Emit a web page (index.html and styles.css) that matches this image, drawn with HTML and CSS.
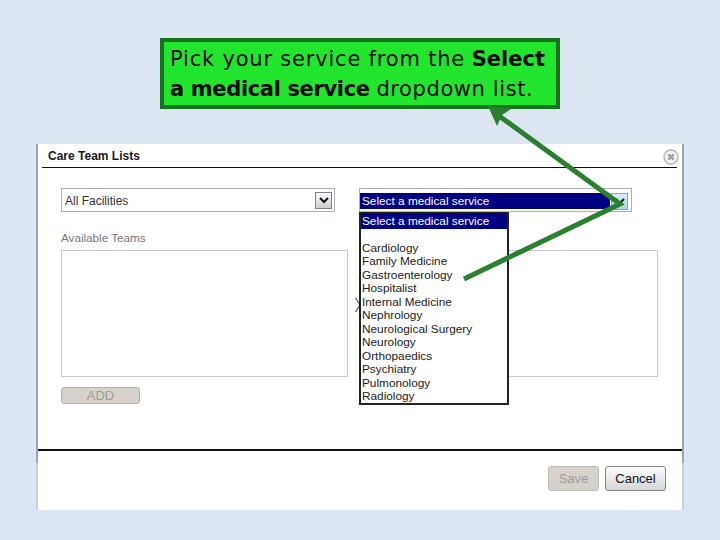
FILE: index.html
```html
<!doctype html>
<html lang="en">
<head>
    <meta charset="UTF-8">
    <title>Care Team Lists</title>
    <link rel="stylesheet" href="styles.css">
</head>
<body>
<div class="callout">
    <span class="callout-first">Pick your service from the</span> <b>Select</b><br><b class="callout-tight">a medical service</b> <span class="callout-rest">dropdown list.</span>
</div>

<div class="dialog">
    <div class="dialog-head">
        <span class="dialog-title">Care Team Lists</span>
        <svg class="close-icon" width="16" height="16" viewBox="0 0 16 16">
            <circle cx="8" cy="8" r="7" fill="#f2f2f2" stroke="#b4b4b4" stroke-width="1.4"/>
            <path d="M5.3 5.3 L10.7 10.7 M10.7 5.3 L5.3 10.7" stroke="#a0a0a0" stroke-width="2.4"/>
        </svg>
    </div>

    <div class="dialog-body">
        <div class="col-left">
            <div class="select">
                <span class="select-text">All Facilities</span>
                <span class="select-btn">
                    <svg width="10" height="7" viewBox="0 0 10 7"><path d="M1 1 L5 5 L9 1" fill="none" stroke="#111" stroke-width="2"/></svg>
                </span>
            </div>
            <div class="label">Available Teams</div>
            <div class="list-box"></div>
            <div class="btn-add">ADD</div>
        </div>
        <div class="col-mid">
            <svg class="move-arrow" width="5" height="14" viewBox="0 0 5 14"><path d="M0.5 0 L5 7 L0.5 14" fill="none" stroke="#555" stroke-width="1.2"/></svg>
        </div>
        <div class="col-right">
            <div class="select select-open">
                <span class="select-text select-picked">Select a medical service</span>
                <span class="select-btn btn-hover">
                    <svg width="10" height="7" viewBox="0 0 10 7"><path d="M1 1 L5 5 L9 1" fill="none" stroke="#111" stroke-width="2"/></svg>
                </span>
                <div class="dropdown">
                    <div class="option option-on">Select a medical service</div>
                    <div class="option option-blank"></div>
                    <div class="option">Cardiology</div>
                    <div class="option">Family Medicine</div>
                    <div class="option">Gastroenterology</div>
                    <div class="option">Hospitalist</div>
                    <div class="option">Internal Medicine</div>
                    <div class="option">Nephrology</div>
                    <div class="option">Neurological Surgery</div>
                    <div class="option">Neurology</div>
                    <div class="option">Orthopaedics</div>
                    <div class="option">Psychiatry</div>
                    <div class="option">Pulmonology</div>
                    <div class="option">Radiology</div>
                </div>
            </div>
            <div class="list-box list-right"></div>
        </div>
    </div>

    <div class="dialog-foot">
        <div class="btn btn-off">Save</div>
        <div class="btn">Cancel</div>
    </div>
</div>

<!-- green pointer lines drawn over the dialog -->
<svg class="pointer" width="720" height="540" viewBox="0 0 720 540">
    <path d="M464 279 L620 204 L495 113" fill="none" stroke="#2b7f30" stroke-width="5"/>
    <path d="M488 106 L511 109 L502 115 L497 126 Z" fill="#2b7f30"/>
</svg>
</body>
</html>
```

FILE: styles.css
```css
* {
    box-sizing: border-box;
}
body {
    margin: 0;
    width: 720px;
    height: 540px;
    overflow: hidden;
    background-color: #dce6f2;
    font-family: "Liberation Sans", Arial, sans-serif;
    padding-top: 38px;
}
.callout {
    width: 400px;
    height: 71px;
    margin-left: 160px;
    padding: 2px 0 0 6px;
    border: 4px solid #16741c;
    background-color: #22e62e;
    color: #0a0a0a;
    font-family: "DejaVu Sans", sans-serif;
    font-size: 21px;
    line-height: 30px;
    white-space: nowrap;
}
.callout-first {
    letter-spacing: 0.8px;
}
.callout-tight {
    letter-spacing: -0.35px;
}
.callout-rest {
    letter-spacing: 0.6px;
}
.dialog {
    width: 648px;
    height: 366px;
    margin: 35px 0 0 36px;
    background-color: #fff;
    border-style: solid;
    border-width: 0 2px;
    border-image: linear-gradient(#a0a4ae 87%, #c8d0dc 87%) 1;
    display: flex;
    flex-direction: column;
}
.dialog-head {
    height: 24px;
    margin: 0 5px 0 4px;
    padding: 5px 0 0 6px;
    border-bottom: 1px solid #111;
    display: flex;
    justify-content: space-between;
}
.dialog-title {
    font-size: 12px;
    font-weight: bold;
    line-height: 15px;
    color: #1a1a1a;
}
.close-icon {
    margin-right: -2px;
}
.dialog-body {
    height: 283px;
    padding: 20px 0 0 23px;
    border-bottom: 2px solid #111;
    display: flex;
}
.col-left {
    width: 287px;
}
.col-mid {
    width: 11px;
    padding: 110px 0 0 7px;
}
.col-right {
    width: 299px;
}
.select {
    width: 274px;
    height: 24px;
    border: 1px solid #adb2b5;
    padding: 3px 2px 3px 3px;
    display: flex;
    justify-content: space-between;
    font-size: 12px;
}
.select-text {
    padding-top: 1px;
    line-height: 17px;
    color: #333;
}
.select-btn {
    width: 17px;
    height: 17px;
    border: 1px solid #7b8188;
    background: linear-gradient(#fafafa, #cfcfcf);
    display: flex;
    align-items: center;
    justify-content: center;
}
.select-open {
    position: relative;
    width: 273px;
    padding: 4px 3px 3px 0;
    font-size: 11.8px;
}
.select-picked {
    flex: 1;
    height: 16px;
    margin-right: 1px;
    padding: 0 0 0 2px;
    line-height: 16px;
    background-color: #000080;
    color: #fff;
}
.btn-hover {
    border-color: #7aa5c4;
    background: linear-gradient(#d8eefc, #a9d6f2);
}
.dropdown {
    position: absolute;
    top: 23px;
    left: -1px;
    z-index: 2;
    width: 150px;
    height: 193px;
    border: 2px solid #222;
    border-top-width: 1px;
    background-color: #fff;
}
.option {
    height: 13.5px;
    line-height: 13.5px;
    padding-left: 1px;
    font-size: 11.8px;
    color: #222;
    white-space: nowrap;
}
.option-on {
    height: 16px;
    line-height: 16px;
    background-color: #000080;
    color: #fff;
}
.option-blank {
    height: 12.5px;
}
.label {
    margin-top: 18px;
    height: 20px;
    font-size: 11.7px;
    line-height: 16px;
    color: #777;
}
.list-box {
    width: 287px;
    height: 127px;
    border: 1px solid #c9c9c9;
    background-color: #fff;
}
.list-right {
    width: 299px;
    margin-top: 38px;
}
.btn-add {
    width: 79px;
    height: 17px;
    margin-top: 10px;
    border: 1px solid #b4b0a8;
    border-radius: 3px;
    background-color: #d6d2cb;
    color: #a09d98;
    font-size: 13px;
    line-height: 15px;
    text-align: center;
}
.dialog-foot {
    flex: 1;
    padding: 15px 16px 0 0;
    display: flex;
    justify-content: flex-end;
    gap: 6px;
}
.btn {
    width: 61px;
    height: 25px;
    border: 1px solid #80858a;
    border-radius: 3px;
    background: linear-gradient(#fbfbfb, #d4d6d6);
    color: #111;
    font-size: 13px;
    line-height: 23px;
    text-align: center;
}
.btn-off {
    width: 51px;
    border-color: #bfbcb5;
    background: #d6d2cb;
    color: #a09d98;
}
.pointer {
    position: absolute;
    top: 0;
    left: 0;
    z-index: 3;
}
```
